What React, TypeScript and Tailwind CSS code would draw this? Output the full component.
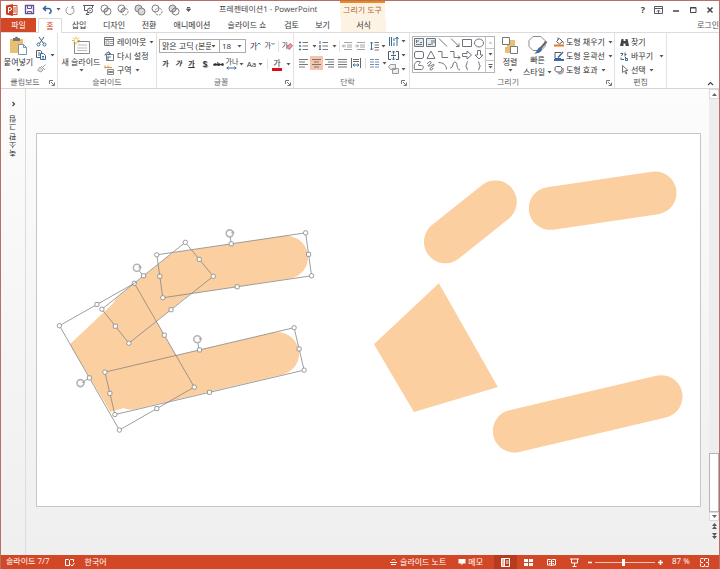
import React, { useState } from "react";

type Kids = { children?: React.ReactNode; className?: string };

const INK = "#555b63";
const BLUE = "#3b6c9c";
const TAN = "#e9bf72";

function Ico({ w = 12, h = 12, children, className = "" }: Kids & { w?: number; h?: number }) {
  return (
    <svg
      width={w}
      height={h}
      viewBox={`0 0 ${w} ${h}`}
      fill="none"
      stroke={INK}
      strokeWidth="1"
      aria-hidden="true"
      className={`shrink-0 ${className}`}
    >
      {children}
    </svg>
  );
}

function Caret({ className = "" }: { className?: string }) {
  return (
    <Ico w={5} h={3} className={className}>
      <path d="M0.5 0h4L2.5 2.5z" fill="#555" stroke="none" />
    </Ico>
  );
}

function Btn({ children, className = "", label }: Kids & { label?: string }) {
  return (
    <button type="button" aria-label={label} className={`flex shrink-0 items-center whitespace-nowrap ${className}`}>
      {children}
    </button>
  );
}

function Group({ title, launcher, className = "", children }: Kids & { title: string; launcher?: boolean }) {
  return (
    <section aria-label={title} className={`flex shrink-0 flex-col border-r border-[#e2e2e2] ${className}`}>
      <div className="flex h-[45px]">{children}</div>
      <div className="flex h-[10px] items-center">
        <span className="flex-1 text-center text-[#666]">{title}</span>
        {launcher && (
          <Btn label={`${title} 옵션`} className="w-2">
            <Ico w={6} h={6}>
              <path d="M0.5 4V0.5H4M2 2l3 3M5.500 2.500v3h-3" stroke="#777" />
            </Ico>
          </Btn>
        )}
      </div>
    </section>
  );
}

/* ---------- Title bar ---------- */

const mergeIcons = [
  { label: "셰이프 병합", a: "none", b: "none", dash: false, lens: true },
  { label: "셰이프 결합", a: "none", b: "none", dash: true, lens: true },
  { label: "셰이프 통합", a: "#d7d7d7", b: "#d7d7d7", dash: false, lens: false },
  { label: "셰이프 빼기", a: "none", b: "none", dash: true, lens: false },
  { label: "셰이프 교차", a: "#ddd", b: "none", dash: false, lens: true },
];

function TitleBar() {
  return (
    <header className="flex h-[17px] shrink-0 items-center">
      <div className="flex w-[218px] shrink-0 items-center pl-[5px]">
        <Ico w={12} h={12}>
          <path d="M6 1.500h5v9H6" stroke="#d24726" fill="#fff" />
          <path d="M7 4h3M7 6h3M7 8h3" stroke="#d24726" />
          <path d="M0 1.500L7 0v12L0 10.500z" fill="#c8401f" stroke="none" />
          <path d="M2.500 9V3.500h1.500a1.500 1.500 0 0 1 0 3H2.500" stroke="#fff" />
        </Ico>
        <Btn label="저장" className="ml-[6px]">
          <Ico w={11} h={11}>
            <path d="M1.500 1.500h8v8h-8z" stroke="#63539b" fill="#fff" strokeWidth="1.400" />
            <path d="M3.500 1.500v3h4v-3M3.500 9.500v-2h4v2" stroke="#63539b" />
          </Ico>
        </Btn>
        <Btn label="실행 취소" className="ml-[7px] gap-1">
          <Ico w={10} h={10}>
            <path d="M4 1L1.500 3.500 4 6M1.500 3.500H6a2.500 2.500 0 0 1 1 5" stroke="#2e62a0" strokeWidth="1.500" />
          </Ico>
          <Caret />
        </Btn>
        <Btn label="다시 실행" className="ml-[4px]">
          <Ico w={10} h={10}>
            <path d="M3 2a4 4 0 1 0 4 0M7 4V1.500h2" stroke="#999" />
          </Ico>
        </Btn>
        <Btn label="슬라이드 쇼 시작" className="ml-2">
          <Ico w={11} h={11}>
            <path d="M0 1.500h11M1.500 2v4.500h3M9.500 2v2M5 8l-2 2.500M3 10.500h3" />
            <circle cx="7" cy="6.500" r="2.500" />
            <path d="M6.500 5.500v2L8 6.500z" fill={INK} stroke="none" />
          </Ico>
        </Btn>
        <span className="ml-[6px] flex gap-[5px]">
          {mergeIcons.map((m) => (
            <Btn key={m.label} label={m.label}>
              <Ico w={12} h={12}>
                <g stroke="#7c7c7c">
                  <circle cx="4.500" cy="4.500" r="3.500" fill={m.a} />
                  <circle cx="7.500" cy="7.500" r="3.500" fill={m.b} strokeDasharray={m.dash ? "2 1" : undefined} />
                  {m.lens && <path d="M4 8a3.500 3.500 0 0 1 4-4 3.500 3.500 0 0 1-4 4z" fill="#ccc" />}
                </g>
              </Ico>
            </Btn>
          ))}
        </span>
        <Btn label="빠른 실행 도구 모음" className="ml-[6px]">
          <Ico w={5} h={5}>
            <path d="M1 .5h3M.5 2h4l-2 2.500z" fill="#666" />
          </Ico>
        </Btn>
      </div>
      <h1 className="w-[121px] shrink-0 whitespace-nowrap text-[#444]">프레젠테이션1 - PowerPoint</h1>
      <div className="flex h-full w-[45px] shrink-0 items-center justify-center whitespace-nowrap border-t-2 border-[#f08a13] bg-[#fdf3e4] text-[#b5622d]">
        그리기 도구
      </div>
      <div className="ml-auto flex items-center gap-[9px] pr-[5px]">
        <Btn label="도움말" className="text-[9px] font-bold text-[#444]">?</Btn>
        <Btn label="리본 표시 옵션">
          <Ico w={9} h={8}>
            <path d="M.5 1v6.500h8V.5h-8zM.5 2.500h8M4.500 7V4M3 5.500L4.500 4 6 5.500" />
          </Ico>
        </Btn>
        <Btn label="최소화">
          <Ico w={8} h={8}><path d="M1 5h6" stroke="#444" strokeWidth="1.500" /></Ico>
        </Btn>
        <Btn label="최대화">
          <Ico w={8} h={8}><path d="M1.500 1.500h5.500v5H1.500zM1 2h6" stroke="#444" /></Ico>
        </Btn>
        <Btn label="닫기">
          <Ico w={8} h={8}><path d="M1.500 1.500l5 5M6.500 1.500l-5 5" stroke="#444" strokeWidth="1.500" /></Ico>
        </Btn>
      </div>
    </header>
  );
}

function Tabs() {
  const tabs = [
    ["삽입", "w-[34px]"],
    ["디자인", "w-[36px]"],
    ["전환", "w-[34px]"],
    ["애니메이션", "w-[52px]"],
    ["슬라이드 쇼", "w-[58px]"],
    ["검토", "w-[31px]"],
    ["보기", "w-[31px]"],
  ];
  return (
    <nav className="flex h-[15px] shrink-0 border-b border-[#dcdcdc]">
      <Btn className="w-[35px] justify-center bg-[#d24726] text-white">파일</Btn>
      <Btn className="-mb-px ml-[2px] w-[24px] justify-center border-x border-t border-[#dcdcdc] bg-white text-[#d24726]">홈</Btn>
      {tabs.map(([t, w]) => (
        <Btn key={t} className={`justify-center ${w}`}>{t}</Btn>
      ))}
      <span className="w-[3px]" />
      <Btn className="w-[45px] justify-center bg-[#fdf3e4]">서식</Btn>
      <Btn className="ml-auto text-[#555]">로그인</Btn>
    </nav>
  );
}

/* ---------- Ribbon groups ---------- */

function Clipboard() {
  return (
    <Group title="클립보드" launcher className="w-[57px]">
      <Btn className="w-[35px] flex-col pt-[3px]">
        <Ico w={19} h={20}>
          <path d="M1 3h13v14H1z" fill={TAN} stroke="none" />
          <path d="M4 2h2a1.500 1.500 0 0 1 3 0h2v3H4z" fill="#777" stroke="none" />
          <path d="M9.500 8.500h5l3 3v7h-8z" fill="#fff" stroke="#7b93ae" />
          <path d="M14.500 8.500v3h3" stroke="#7b93ae" />
        </Ico>
        <span className="leading-[11px]">붙여넣기</span>
        <Caret className="mt-[2px]" />
      </Btn>
      <div className="flex flex-col gap-[2px] pt-[3px]">
        <Btn label="잘라내기">
          <Ico w={11} h={11}>
            <path d="M3 1l4.500 6.500M8 1L3.500 7.500" />
            <circle cx="2.500" cy="8.500" r="1.500" stroke={BLUE} />
            <circle cx="8.500" cy="8.500" r="1.500" stroke={BLUE} />
          </Ico>
        </Btn>
        <Btn label="복사" className="gap-[3px]">
          <Ico w={11} h={12}>
            <path d="M.5 1.500h4l1 1v6h-5z" fill="#fff" />
            <path d="M4.500 4.500h3l2 2v4h-5z" fill="#fff" stroke={BLUE} />
            <path d="M6 7.500h2M6 9h2M2 4h2M2 6h2" stroke={BLUE} />
          </Ico>
          <Caret />
        </Btn>
        <Btn label="서식 복사">
          <Ico w={11} h={11}>
            <path d="M9.500 1.500L6 5M4 4l3 3-2 2-3.500-1.500z" stroke="#aaa" fill="#ddd" />
            <path d="M5 3l4 4" stroke="#999" />
          </Ico>
        </Btn>
      </div>
    </Group>
  );
}

function Slides() {
  return (
    <Group title="슬라이드" className="w-[99px]">
      <Btn className="w-[46px] flex-col pt-[3px]">
        <Ico w={20} h={20}>
          <path d="M3.500 5.500h15v12h-15z" fill="#fff" stroke="#8b8b8b" />
          <path d="M7 9h9M6 12h10M6 14.500h10" stroke="#bbb" />
          <path d="M5 .5v8M1 4.500h8M2 1.500l6 6M8 1.500l-6 6" stroke="#e6b34b" />
          <circle cx="5" cy="4.500" r="1.500" fill="#fff" stroke="none" />
        </Ico>
        <span className="leading-[11px]">새 슬라이드</span>
        <Caret className="mt-[2px]" />
      </Btn>
      <div className="flex flex-col gap-[2px] pt-[3px]">
        <Btn className="h-3 gap-[2px]">
          <Ico w={11} h={10}>
            <path d="M.5.5h9v8h-9zM.5 2.500h9" stroke="#777" />
            <path d="M2 4h3v3H2zM6 4.500h3M6 6.500h3" stroke="#999" />
          </Ico>
          레이아웃
          <Caret className="ml-[1px]" />
        </Btn>
        <Btn className="h-3 gap-[2px]">
          <Ico w={11} h={11}>
            <path d="M2.500 3.500h7v6h-7zM2 6h5" stroke="#777" />
            <path d="M1 4.500a3 3 0 0 1 5-2M4 .5L6.500 2.500 4 4M4 6v3" stroke={BLUE} />
          </Ico>
          다시 설정
        </Btn>
        <Btn className="h-3 gap-[2px]">
          <Ico w={11} h={11}>
            <path d="M1 2.500h7M1 .5v3M4 .5v2" stroke="#e08a3c" />
            <path d="M3.500 4.500h6v2h-6zM3.500 7.500h6v2h-6z" stroke="#888" />
          </Ico>
          구역
          <Caret className="ml-[1px]" />
        </Btn>
      </div>
    </Group>
  );
}

function Picker({ label, options, className = "" }: { label: string; options: string[]; className?: string }) {
  return (
    <div className={`relative h-[14px] border border-[#ababab] ${className}`}>
      <select aria-label={label} className="block h-full w-full appearance-none bg-white pl-[2px] pr-2 leading-[12px]">
        {options.map((o) => (
          <option key={o}>{o}</option>
        ))}
      </select>
      <span className="pointer-events-none absolute inset-y-0 right-0 flex w-2 items-center bg-white">
        <Caret />
      </span>
    </div>
  );
}

function FontGroup() {
  return (
    <Group title="글꼴" launcher className="w-[137px]">
      <div className="flex flex-col gap-[3px] pl-[2px] pt-[6px]">
        <div className="flex items-center">
          <Picker label="글꼴" options={["맑은 고딕 (본문)"]} className="w-[61px]" />
          <Picker label="글꼴 크기" options={["18", "20", "24"]} className="-ml-px w-[27px]" />
          <Btn label="글꼴 크기 크게" className="ml-[4px]">
            가
            <Ico w={4} h={8}><path d="M.5 2.500L2 1l1.500 1.500" stroke={BLUE} /></Ico>
          </Btn>
          <Btn label="글꼴 크기 작게" className="ml-[3px] text-[7px]">
            가
            <Ico w={4} h={8}><path d="M.5 1L2 2.500 3.500 1" stroke={BLUE} /></Ico>
          </Btn>
          <span className="ml-[3px] h-[11px] w-px bg-[#e2e2e2]" />
          <Btn label="서식 지우기" className="ml-[3px] text-[7px]">
            가
            <Ico w={7} h={10} className="-ml-[2px]"><path d="M1 6.500l3-4 2.500 2-3 4z" fill="#e79aa8" stroke="#c8687c" /></Ico>
          </Btn>
        </div>
        <div className="flex h-4 items-center text-[7px]">
          <Btn label="굵게" className="w-[13px] justify-center font-bold">가</Btn>
          <Btn label="기울임꼴" className="w-[13px] justify-center font-bold italic">가</Btn>
          <Btn label="밑줄" className="w-[13px] justify-center font-bold underline">가</Btn>
          <Btn label="그림자" className="w-[14px] justify-center text-[9px] font-bold [text-shadow:1px_1px_1px_#999]">S</Btn>
          <Btn label="취소선" className="w-[13px] justify-center text-[6px] font-bold line-through">abc</Btn>
          <Btn label="문자 간격" className="w-[20px] justify-center gap-[1px]">
            <span className="flex flex-col items-center leading-[8px]">
              가나
              <Ico w={11} h={4}><path d="M.5 2h10M2.500 .5L1 2l1.500 1.500M8.500 .5L10 2 8.500 3.500" stroke={BLUE} /></Ico>
            </span>
            <Caret />
          </Btn>
          <Btn label="대/소문자 바꾸기" className="w-[20px] justify-center gap-[2px] text-[8px]">Aa<Caret /></Btn>
          <span className="ml-[2px] h-[11px] w-px bg-[#e2e2e2]" />
          <Btn label="글꼴 색" className="ml-[4px] gap-[4px] text-[8px]">
            <span className="w-[10px] border-b-[3px] border-[#e00b18] text-center leading-[10px]">가</span>
            <Caret />
          </Btn>
        </div>
      </div>
    </Group>
  );
}

function Lines({ rows }: { rows: string }) {
  return (
    <Ico w={9} h={10}><path d={rows} stroke="#777" /></Ico>
  );
}

function Paragraph() {
  return (
    <Group title="단락" launcher className="w-[116px]">
      <div className="flex w-[94px] flex-col gap-[3px] pl-[3px] pt-[6px]">
        <div className="flex h-[14px] items-center">
          <Btn label="글머리 기호" className="gap-[4px] pl-[2px]">
            <Ico w={9} h={10}>
              <path d="M3.500 1.500h5.500M3.500 5h5.500M3.500 8.500h5.500" stroke="#777" />
              <path d="M0 1.500h2M0 5h2M0 8.500h2" stroke={BLUE} strokeWidth="1.500" />
            </Ico>
            <Caret />
          </Btn>
          <Btn label="번호 매기기" className="ml-[2px] gap-[4px]">
            <Ico w={9} h={10}>
              <path d="M3.500 1.500h5.500M3.500 5h5.500M3.500 8.500h5.500" stroke="#777" />
              <path d="M1 0v3M0 5h2M0 8.500h2M1 4v5" stroke={BLUE} />
            </Ico>
            <Caret />
          </Btn>
          <span className="ml-[2px] h-[11px] w-px bg-[#e2e2e2]" />
          <Btn label="목록 수준 줄임" className="ml-[2px]">
            <Ico w={10} h={8}><path d="M2 .5h8M5 3h5M5 5h5M2 7.500h8M4 4H.5M2 2.500L.5 4 2 5.500" stroke="#a5a5a5" /></Ico>
          </Btn>
          <Btn label="목록 수준 늘림" className="ml-[3px]">
            <Ico w={10} h={8}><path d="M2 .5h8M5 3h5M5 5h5M2 7.500h8M0 4h3.500M2 2.500L3.500 4 2 5.500" stroke="#a5a5a5" /></Ico>
          </Btn>
          <Btn label="줄 간격" className="ml-[5px] gap-[2px]">
            <Ico w={9} h={10}>
              <path d="M4.500 1.500H9M4.500 4h4.500M4.500 6.500h4.500M4.500 9H9" stroke="#777" />
              <path d="M1.500 1v8M0 2.500L1.500 1 3 2.500M0 7.500L1.500 9 3 7.500" stroke={BLUE} />
            </Ico>
            <Caret />
          </Btn>
        </div>
        <div className="flex h-[14px] items-center">
          <Btn label="왼쪽 맞춤" className="h-[14px] w-[13px] justify-center"><Lines rows="M0 1.500h9M0 4h6M0 6.500h9M0 9h6" /></Btn>
          <Btn label="가운데 맞춤" className="h-[14px] w-[13px] justify-center bg-[#f7c3ab]"><Lines rows="M0 1.500h9M2 4h5M0 6.500h9M2 9h5" /></Btn>
          <Btn label="오른쪽 맞춤" className="h-[14px] w-[13px] justify-center"><Lines rows="M0 1.500h9M3 4h6M0 6.500h9M3 9h6" /></Btn>
          <Btn label="양쪽 맞춤" className="h-[14px] w-[13px] justify-center"><Lines rows="M0 1.500h9M0 4h9M0 6.500h9M0 9h9" /></Btn>
          <Btn label="균등 분할" className="h-[14px] w-[14px] justify-center">
            <Ico w={10} h={10}>
              <path d="M.5 0v10M9.500 0v10M2 1.500h6M2 3.500h6" stroke="#666" />
              <path d="M2 7h6M3.500 5.500L2 7l1.500 1.500M6.500 5.500L8 7 6.500 8.500" stroke={BLUE} />
            </Ico>
          </Btn>
          <span className="ml-[2px] h-[11px] w-px bg-[#e2e2e2]" />
          <Btn label="열" className="ml-[4px] gap-[3px]">
            <Ico w={9} h={10}><path d="M0 1.500h4M0 4h4M0 6.500h4M0 9h4M5 1.500h4M5 4h4M5 6.500h4M5 9h4" stroke="#6f8fb0" /></Ico>
            <Caret />
          </Btn>
        </div>
      </div>
      <div className="flex flex-col gap-[3px] pt-[3px]">
        <Btn label="텍스트 방향" className="gap-[2px]">
          <Ico w={11} h={11}><path d="M1.500 1v9M3.500 1v9M6 2v3M6 6.500V10M9 10V1M7.500 3L9 1l1.500 2" stroke={BLUE} /></Ico>
          <Caret />
        </Btn>
        <Btn label="텍스트 맞춤" className="gap-[2px]">
          <Ico w={11} h={11}>
            <path d="M3 1.500H.5v8H3M8 1.500h2.500v8H8M3 5.500h5" />
            <path d="M5.500 1v3.500M5.500 10V6.500M4 2.500L5.500 1 7 2.500M4 8.500L5.500 10 7 8.500" stroke={BLUE} />
          </Ico>
          <Caret />
        </Btn>
        <Btn label="SmartArt로 변환" className="gap-[2px]">
          <Ico w={11} h={11}><path d="M.5 2.500L2.500.5h5v5h-5zM4.500 4.500h6v5h-6z" stroke="#999" fill="#eee" /></Ico>
          <Caret />
        </Btn>
      </div>
    </Group>
  );
}

const galleryShapes = [
  { n: "텍스트 상자", d: "M1.500 1.500h9v8h-9zM3 4h3M3 7.500h6M7 5.500h2M3.500 3v3", f: "#e4ebf2" },
  { n: "세로 텍스트 상자", d: "M1.500 1.500h9v8h-9zM9 3v3M7 3v5M3 7.500h3", f: "#e4ebf2" },
  { n: "선", d: "M2 1.500l8 8", f: "none" },
  { n: "화살표", d: "M2 1.500l8 8M10 6.500v3H7", f: "none" },
  { n: "직사각형", d: "M1.500 2.500h9v7h-9z", f: "none" },
  { n: "타원", d: "M10.500 6a4.500 4 0 1 1-9 0 4.500 4 0 1 1 9 0z", f: "none" },
  { n: "둥근 직사각형", d: "M3 2.500h6a2 2 0 0 1 1.500 1.500v4a2 2 0 0 1-1.500 1.500H3A2 2 0 0 1 1.500 8V4A2 2 0 0 1 3 2.500z", f: "none" },
  { n: "삼각형", d: "M6 2L2 9.500h8z", f: "none" },
  { n: "꺾인 연결선", d: "M1 2.500h4v6h6", f: "none" },
  { n: "꺾인 화살표", d: "M1 2.500h4v6h6M9 6.500l2 2-2 2", f: "none" },
  { n: "오른쪽 화살표", d: "M1.500 4.500H6V2l4.500 4L6 10V7.500H1.500z", f: "none" },
  { n: "아래쪽 화살표", d: "M4.500 1.500h3V6H10L6 10 2 6h2.500z", f: "none" },
  { n: "자유형", d: "M4 1.500C1 3 1 6 1.500 9.500h7c3-1 2-4 0-4H6C4 5 8 3 7 1.500z", f: "none" },
  { n: "자유 곡선", d: "M2 4c2-3 5-3 4-1S1 6 4 6s5-3 5-1-4 2-4 4 3 1 3-1", f: "none" },
  { n: "호", d: "M1.500 2.500C6 2.500 9.500 5 9.500 9.500", f: "none" },
  { n: "곡선", d: "M1 8C5 8 3 2 6 2s1 8 5 8", f: "none" },
  { n: "왼쪽 중괄호", d: "M7 1.500C5 1.500 6.500 6 4.500 6 6.500 6 5 10 7 10", f: "none" },
  { n: "오른쪽 중괄호", d: "M5 1.500C7 1.500 5.500 6 7.500 6 5.500 6 7 10 5 10", f: "none" },
];

function Drawing() {
  return (
    <Group title="그리기" launcher className="w-[205px]">
      <div className="ml-[2px] mt-[3px] flex h-[37px] w-[83px] border border-[#b4b4b4]">
        <div className="grid w-[72px] shrink-0 grid-cols-6 grid-rows-3">
          {galleryShapes.map((s) => (
            <Btn key={s.n} label={s.n}>
              <Ico w={12} h={12}><path d={s.d} fill={s.f} stroke="#70757c" /></Ico>
            </Btn>
          ))}
        </div>
        <div className="flex flex-1 flex-col divide-y divide-[#c4c4c4] border-l border-[#c4c4c4]">
          <Btn label="위로" className="flex-1 justify-center">
            <Ico w={5} h={3}><path d="M.5 2.500h4L2.500.5z" fill="#bbb" stroke="none" /></Ico>
          </Btn>
          <Btn label="아래로" className="flex-1 justify-center"><Caret /></Btn>
          <Btn label="자세히" className="flex-1 justify-center">
            <Ico w={5} h={5}><path d="M.5.500h4" /><path d="M.5 2h4l-2 2.500z" fill={INK} stroke="none" /></Ico>
          </Btn>
        </div>
      </div>
      <Btn className="ml-[3px] w-[24px] flex-col pt-[3px]">
        <Ico w={18} h={20}>
          <path d="M6 4h8v8h-4v5H4v-6h2z" fill={TAN} stroke="none" />
          <path d="M1.500 1.500h7v7h-7zM9.500 10.500h7v7h-7z" fill="#fff" stroke="#777" />
        </Ico>
        <span className="leading-[12px]">정렬</span>
        <Caret className="mt-[1px]" />
      </Btn>
      <Btn className="w-[31px] flex-col pt-[1px]">
        <Ico w={20} h={20}>
          <path d="M5 2.500h8l4 4v6l-4 4H5l-4-4v-6z" fill="#fff" stroke="#8a8a8a" />
          <path d="M18.500 7.500l-7 8" stroke="#666" strokeWidth="2" />
          <path d="M12 13l2 2.500c-1 3-4 4-8 4 3-1 3-5 6-6.500z" fill={BLUE} stroke="none" />
        </Ico>
        <span className="leading-[12px]">빠른</span>
        <span className="flex items-center gap-[2px] leading-[12px]">스타일<Caret /></span>
      </Btn>
      <div className="flex flex-col gap-[2px] pl-[1px] pt-[3px]">
        <Btn className="h-3 gap-[2px]">
          <Ico w={10} h={10}>
            <path d="M2.500 4.500l3-3 3 3-3 2.500zM4 3V.5" />
            <path d="M8.500 4l1 2.500" stroke={BLUE} />
            <path d="M0 8.500h10" stroke="#e87722" strokeWidth="2" />
          </Ico>
          도형 채우기
          <Caret className="ml-[1px]" />
        </Btn>
        <Btn className="h-3 gap-[2px]">
          <Ico w={10} h={10}>
            <path d="M7 1.500H1v6h6" />
            <path d="M9 1L4 6.500" stroke={BLUE} strokeWidth="1.500" />
            <path d="M0 9h10" stroke="#2f6eb5" strokeWidth="2" />
          </Ico>
          도형 윤곽선
          <Caret className="ml-[1px]" />
        </Btn>
        <Btn className="h-3 gap-[2px]">
          <Ico w={10} h={10}>
            <path d="M4 8.500h3l2.500-2.500V3" stroke="#aaa" strokeWidth="2" />
            <path d="M2.500 1.500h4L8 3v2L6.500 7h-4L1 5.500v-3z" fill="#fff" />
          </Ico>
          도형 효과
          <Caret className="ml-[1px]" />
        </Btn>
      </div>
    </Group>
  );
}

function Editing() {
  return (
    <Group title="편집" className="w-[52px]">
      <div className="flex flex-col gap-[2px] pl-[5px] pt-[3px]">
        <Btn className="h-3 gap-[2px]">
          <Ico w={9} h={9}>
            <path d="M1.500 1h2v2h2V1h2l1.500 7H5.500V5.500h-2V8H0z" fill="#454545" stroke="none" />
          </Ico>
          찾기
        </Btn>
        <Btn className="h-3 gap-[2px]">
          <Ico w={9} h={9}>
            <path d="M.5 1.500h2.500L1.500 4M5 .5v4M5 2.500h1.500" />
            <path d="M1 5.500v2h3M5.500 5v3.500h2V6.500h-2" stroke={BLUE} />
          </Ico>
          바꾸기
          <Caret className="ml-[4px]" />
        </Btn>
        <Btn className="h-3 gap-[2px]">
          <Ico w={9} h={10}><path d="M2.500.500v7l2-1.500 1.500 3 1-.5-1.500-3H8z" fill="#fff" stroke="#777" /></Ico>
          선택
          <Caret className="ml-[1px]" />
        </Btn>
      </div>
    </Group>
  );
}

/* ---------- Slide ---------- */

type Pt = [number, number];
type Frame = { corners: [Pt, Pt, Pt, Pt]; stem: [Pt, Pt] };

const frames: Frame[] = [
  { corners: [[59, 325.5], [134, 283], [194, 387], [119, 430]], stem: [[89, 378], [80, 383]] },
  { corners: [[101.5, 309], [185, 242], [213, 276], [128.5, 343]], stem: [[143, 275.5], [136.500, 267.5]] },
  { corners: [[156.500, 254.5], [305.5, 232.5], [311.5, 275.5], [162.5, 297.5]], stem: [[231, 243.5], [229.5, 233]] },
  { corners: [[104.5, 372], [294, 327.5], [304, 370], [114.5, 414.5]], stem: [[199, 350], [197, 339]] },
];

const fingers: [Pt, Pt][] = [
  [[132, 312.5], [182, 272.5]],
  [[181, 273], [286.5, 257]],
  [[130.5, 388], [277.5, 353.5]],
  [[445.5, 241.5], [495.5, 201.5]],
  [[550.5, 208], [655.5, 192.5]],
  [[514.5, 431], [661.5, 396.5]],
];

const mid = (a: Pt, b: Pt): Pt => [(a[0] + b[0]) / 2, (a[1] + b[1]) / 2];

function SelectionFrame({ corners, stem }: Frame) {
  const mids = corners.map((c, i) => mid(c, corners[(i + 1) % 4]));
  const [from, to] = stem;
  return (
    <g stroke="#858585" strokeWidth="0.8" fill="none">
      <polygon points={corners.map((c) => c.join(",")).join(" ")} />
      <path d={`M${from[0]} ${from[1]}L${to[0]} ${to[1]}`} />
      <circle cx={to[0]} cy={to[1]} r="3.500" stroke="#b5b5b5" strokeWidth="1.600" fill="#fff" />
      <path d={`M${to[0] + 1} ${to[1]}h4l-1.500 -2.500z`} fill="#aaa" stroke="none" />
      {mids.map((m, i) => (
        <rect key={i} x={m[0] - 2} y={m[1] - 2} width="4" height="4" rx="0.5" fill="#fff" />
      ))}
      {corners.map((c, i) => (
        <circle key={i} cx={c[0]} cy={c[1]} r="2.200" fill="#fff" />
      ))}
    </g>
  );
}

function Slide() {
  return (
    <svg viewBox="36.5 133.5 664 373" role="img" aria-label="슬라이드 7" className="block w-full border border-[#c6c6c6] bg-white">
      <g fill="#fbcf9f" stroke="none">
        <polygon points="134,283 194,387 110,412 69.5,344" />
        <polygon points="439,283 498,387 414,412 374,344" />
      </g>
      <g stroke="#fbcf9f" strokeWidth="43" strokeLinecap="round">
        {fingers.map(([a, b], i) => (
          <line key={i} x1={a[0]} y1={a[1]} x2={b[0]} y2={b[1]} />
        ))}
      </g>
      {frames.map((f, i) => (
        <SelectionFrame key={i} {...f} />
      ))}
    </svg>
  );
}

function Workspace() {
  return (
    <main className="flex min-h-0 flex-1 bg-linear-to-b from-[#fcfcfc] to-[#efefef]">
      <aside className="flex w-[25px] shrink-0 flex-col items-center gap-[8px] border-r border-[#dcdcdc] pt-3">
        <Btn label="축소판 그림 펼치기">
          <Ico w={5} h={6}><path d="M1.500 1l2 2-2 2" stroke="#444" strokeWidth="1.200" /></Ico>
        </Btn>
        <span className="rotate-180 whitespace-nowrap [writing-mode:vertical-rl]">축소판 그림</span>
      </aside>
      <div className="flex min-w-0 flex-1 items-center pb-1 pl-[10px] pr-2">
        <Slide />
      </div>
      <div className="flex w-[10px] shrink-0 flex-col items-center">
        <Btn label="위로 스크롤" className="h-[10px] w-full justify-center border border-[#dadada] bg-white">
          <Ico w={5} h={3}><path d="M0 3h5L2.500 0z" fill="#666" stroke="none" /></Ico>
        </Btn>
        <div className="flex w-full flex-1 flex-col justify-end bg-[#ededed]">
          <div className="h-[59px] border border-[#b5b5b5] bg-white" />
        </div>
        <Btn label="아래로 스크롤" className="h-[9px] w-full justify-center border border-[#dadada] bg-white">
          <Ico w={5} h={3}><path d="M0 0h5L2.500 3z" fill="#666" stroke="none" /></Ico>
        </Btn>
        <Btn label="이전 슬라이드" className="h-[10px]">
          <Ico w={5} h={6}><path d="M0 3h5L2.500 0zM0 6h5L2.500 3z" fill="#555" stroke="none" /></Ico>
        </Btn>
        <Btn label="다음 슬라이드" className="mb-[14px] h-[10px]">
          <Ico w={5} h={6}><path d="M0 0h5L2.500 3zM0 3h5L2.500 6z" fill="#555" stroke="none" /></Ico>
        </Btn>
      </div>
    </main>
  );
}

/* ---------- Status bar ---------- */

function StatusBar() {
  const [zoom, setZoom] = useState(87);
  return (
    <footer className="flex h-[14px] shrink-0 items-center whitespace-nowrap bg-[#d24726] pl-[5px] leading-[12px] text-white">
      <span className="shrink-0">{`슬라이드 ${7}/${7}`}</span>
      <Btn label="맞춤법 검사" className="ml-[15px]">
        <Ico w={10} h={9}>
          <path d="M4.500 7.500h-4v-6h3l1 1 1-1h3V4M4.500 2.500v5M5.500 6.500L7 8l2.500-3" stroke="#fff" />
        </Ico>
      </Btn>
      <Btn className="ml-[10px]">한국어</Btn>
      <Btn className="ml-auto gap-[3px]">
        <Ico w={7} h={8}><path d="M2 2.500L3.500 1 5 2.500M0 4.500h7M1 6.500h5" stroke="#fff" /></Ico>
        슬라이드 노트
      </Btn>
      <Btn className="ml-3 gap-[2px]">
        <Ico w={8} h={8}><path d="M.5 1h7v4.500H5L3.500 7.500v-2h-3z" fill="#fff" stroke="none" /></Ico>
        메모
      </Btn>
      <div className="ml-[11px] flex h-full">
        <Btn label="기본 보기" className="w-[23px] justify-center bg-[#b83b1d]">
          <Ico w={9} h={9}><path d="M.5.500h8v8h-8zM3.500 1v7.500M5 3h2.500M5 5h2.500" stroke="#fff" /><path d="M1 1h2v7H1z" fill="#f2b9a8" stroke="none" /></Ico>
        </Btn>
        <Btn label="여러 슬라이드" className="w-[23px] justify-center">
          <Ico w={9} h={9}><path d="M0 1h4v3H0zM5 1h4v3H5zM0 5h4v3H0zM5 5h4v3H5z" fill="#fff" stroke="none" /></Ico>
        </Btn>
        <Btn label="읽기용 보기" className="w-[23px] justify-center">
          <Ico w={9} h={9}><path d="M4.500 2v6M.5 1.500h3l1 .5 1-.5h3v5.500h-3l-1 1-1-1h-3zM2 3.500h1.500M2 5.500h1.500M5.500 3.500H7M5.500 5.500H7" stroke="#fff" /></Ico>
        </Btn>
        <Btn label="슬라이드 쇼" className="w-[23px] justify-center">
          <Ico w={9} h={9}><path d="M0 1h9M1.500 1v4h6V1M4.500 5v3M2.500 8.500h4" stroke="#fff" /></Ico>
        </Btn>
      </div>
      <Btn label="축소" className="ml-[2px]">
        <Ico w={5} h={7}><path d="M0 3.500h4" stroke="#fff" strokeWidth="1.500" /></Ico>
      </Btn>
      <input
        id="zoom"
        aria-label="확대/축소"
        type="range"
        min={10}
        max={170}
        value={zoom}
        onChange={(e) => setZoom(Number(e.target.value))}
        className="mx-[2px] h-[9px] w-[60px] shrink-0 appearance-none bg-transparent [&::-webkit-slider-runnable-track]:h-px [&::-webkit-slider-runnable-track]:bg-[#f3c8bb] [&::-webkit-slider-thumb]:-mt-[3px] [&::-webkit-slider-thumb]:h-[7px] [&::-webkit-slider-thumb]:w-[3px] [&::-webkit-slider-thumb]:appearance-none [&::-webkit-slider-thumb]:bg-white"
      />
      <Btn label="확대">
        <Ico w={7} h={7}><path d="M1 3.500h5M3.500 1v5" stroke="#fff" strokeWidth="1.500" /></Ico>
      </Btn>
      <output htmlFor="zoom" className="ml-[8px] w-[20px]">{`${zoom} %`}</output>
      <Btn label="창에 맞춤" className="ml-[8px] mr-[10px]">
        <Ico w={9} h={9}><path d="M.5.500h8v8h-8zM4.500 1v2M4.500 6v2M1 4.500h2M6 4.500h2" stroke="#fff" strokeDasharray="3 1" /></Ico>
      </Btn>
    </footer>
  );
}

export default function App() {
  return (
    <div
      lang="ko"
      className="flex h-screen flex-col overflow-hidden border-x border-t border-[#b96f66] bg-white font-['Open_Sans','Noto_Sans_CJK_KR',sans-serif] text-[8px] leading-[10px] text-[#333] [text-rendering:geometricPrecision]"
    >
      <TitleBar />
      <Tabs />
      <div className="flex h-[56px] shrink-0 border-b border-[#d5d5d5] bg-white">
        <Clipboard />
        <Slides />
        <FontGroup />
        <Paragraph />
        <Drawing />
        <Editing />
        <Btn label="리본 메뉴 축소" className="ml-auto mr-[5px] self-end pb-[2px]">
          <Ico w={7} h={5}><path d="M1 4l2.500-2.500L6 4" stroke="#444" strokeWidth="1.200" /></Ico>
        </Btn>
      </div>
      <Workspace />
      <StatusBar />
    </div>
  );
}
